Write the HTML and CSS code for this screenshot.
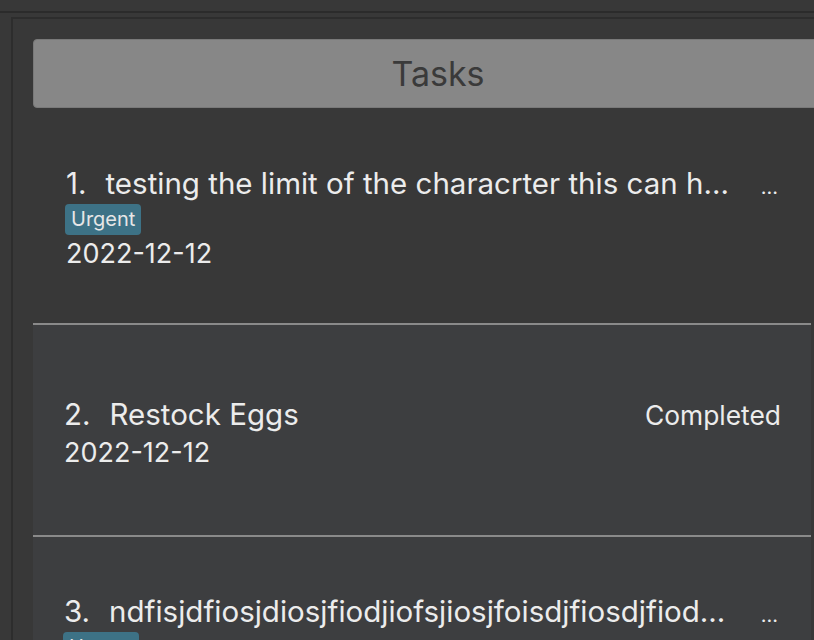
FILE: index.html
```html
<!DOCTYPE html>
<html>
<head>
<meta charset="utf-8">
<link rel="stylesheet" href="styles.css">
</head>
<body>
<div class="topbar"></div>
<div class="frame">
  <div class="panel">
    <div class="header">Tasks</div>
    <div class="list">
      <div class="row row-first">
        <div class="content">
          <div class="line">
            <div class="title"><span class="num">1.</span>testing the limit of the characrter this can h...</div>
            <div class="more">...</div>
          </div>
          <div class="tags"><span class="tag">Urgent</span></div>
          <div class="date">2022-12-12</div>
        </div>
      </div>
      <div class="row row-alt row-short">
        <div class="content">
          <div class="line">
            <div class="title"><span class="num">2.</span>Restock Eggs</div>
            <div class="status">Completed</div>
          </div>
          <div class="date">2022-12-12</div>
        </div>
      </div>
      <div class="row row-alt row-last">
        <div class="content">
          <div class="line">
            <div class="title"><span class="num">3.</span>ndfisjdfiosjdiosjfiodjiofsjiosjfoisdjfiosdjfiod...</div>
            <div class="more">...</div>
          </div>
          <div class="tags"><span class="tag">Urgent</span></div>
          <div class="date">2022-12-12</div>
        </div>
      </div>
    </div>
  </div>
</div>
</body>
</html>
```

FILE: styles.css
```css
html, body {
  margin: 0;
  padding: 0;
  background: #383838;
  height: 100%;
  overflow: hidden;
}
body {
  font-family: Inter, "Noto Sans", sans-serif;
  color: #ececec;
}
.topbar {
  height: 11px;
  border-bottom: 2px solid #2b2b2b;
}
.frame {
  margin-top: 4px;
  margin-left: 11px;
  border-top: 2px solid #2d2d2d;
  border-left: 2px solid #2d2d2d;
  height: 700px;
}
.panel {
  padding: 20px 0 0 20px;
}
.header {
  height: 67px;
  margin-right: -29px;
  background: #878787;
  border: 1px solid #797979;
  border-radius: 4px;
  color: #3a3a3a;
  font-size: 34px;
  line-height: 67px;
  text-align: center;
}
.list {
  margin-right: 3px;
}
.row {
  display: flex;
  flex-direction: column;
  justify-content: center;
  padding: 6px 30px 0 31px;
  box-sizing: border-box;
  border-bottom: 2px solid #8a8a8a;
}
.row-first {
  height: 217px;
  padding-left: 33px;
}
.row-alt {
  background: #3d3e40;
}
.row-short {
  height: 212px;
}
.row-last {
  height: 212px;
  border-bottom: none;
}
.line {
  display: flex;
  align-items: baseline;
  justify-content: space-between;
  height: 36px;
  line-height: 36px;
}
.title {
  font-size: 29.5px;
  white-space: nowrap;
}
.num {
  display: inline-block;
  margin-right: 19px;
}
.more {
  font-size: 20px;
  margin-right: 3px;
}
.status {
  font-size: 26.4px;
}
.tags {
  margin-top: 3px;
  height: 31px;
  margin-bottom: 1px;
  display: flex;
}
.tag {
  background: #3d7286;
  color: #e6e6e6;
  border-radius: 4px;
  font-size: 20px;
  line-height: 31px;
  padding: 0 6px;
  margin-left: -1px;
}
.date {
  font-size: 27px;
  line-height: 36px;
  margin-top: 3px;
}
.tags + .date {
  margin-top: 0;
}
```
